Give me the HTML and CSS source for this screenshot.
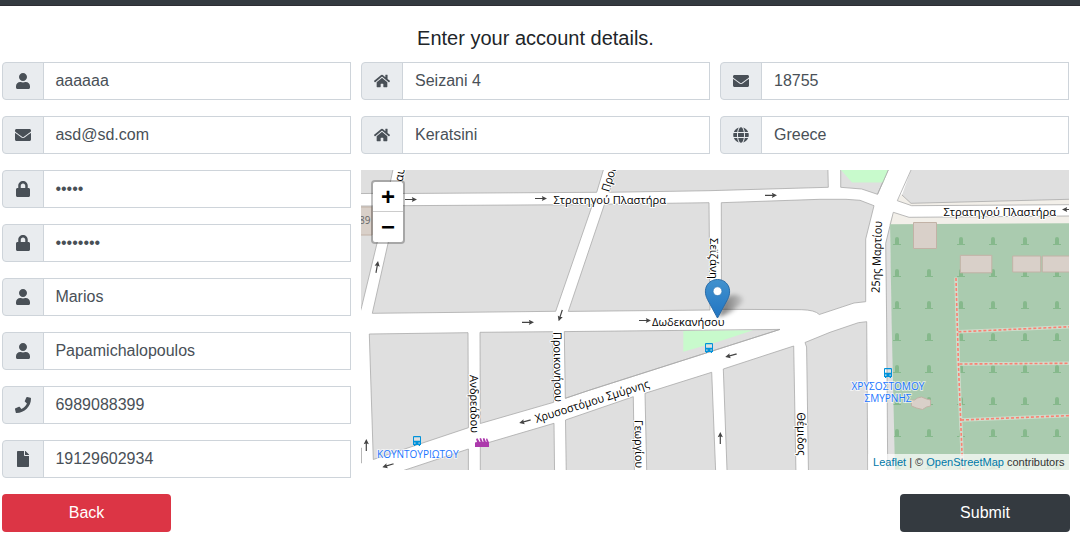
FILE: index.html
```html
<!DOCTYPE html>
<html lang="en">
<head>
<meta charset="utf-8">
<title>Account details</title>
<link rel="stylesheet" href="styles.css">
</head>
<body>
<svg class="sprite" aria-hidden="true">
  <symbol id="user" viewBox="0 0 448 512"><path d="M224 256c70.7 0 128-57.3 128-128S294.7 0 224 0 96 57.3 96 128s57.3 128 128 128zm89.6 32h-16.7c-22.2 10.2-46.9 16-72.9 16s-50.6-5.8-72.9-16h-16.7C60.2 288 0 348.2 0 422.4V464c0 26.5 21.5 48 48 48h352c26.5 0 48-21.5 48-48v-41.6c0-74.2-60.2-134.4-134.4-134.4z"/></symbol>
  <symbol id="envelope" viewBox="0 0 512 512"><path d="M502.3 190.8c3.9-3.1 9.7-.2 9.7 4.7V400c0 26.5-21.5 48-48 48H48c-26.5 0-48-21.5-48-48V195.6c0-5 5.7-7.8 9.7-4.7 22.4 17.4 52.1 39.5 154.1 113.6 21.1 15.4 56.7 47.8 92.2 47.6 35.7.3 72-32.8 92.3-47.6 102-74.1 131.6-96.3 154-113.7zM256 320c23.2.4 56.6-29.2 73.4-41.4 132.7-96.3 142.8-104.7 173.4-128.7 5.8-4.5 9.2-11.5 9.2-18.9v-19c0-26.5-21.5-48-48-48H48c-26.5 0-48 21.5-48 48v19c0 7.4 3.4 14.3 9.2 18.9 30.6 23.9 40.7 32.4 173.4 128.7 16.8 12.2 50.2 41.8 73.4 41.4z"/></symbol>
  <symbol id="lock" viewBox="0 0 448 512"><path d="M400 224h-24v-72C376 68.2 307.8 0 224 0S72 68.2 72 152v72H48c-26.5 0-48 21.5-48 48v192c0 26.5 21.5 48 48 48h352c26.5 0 48-21.5 48-48V272c0-26.5-21.5-48-48-48zm-104 0H152v-72c0-39.7 32.3-72 72-72s72 32.3 72 72v72z"/></symbol>
  <symbol id="home" viewBox="0 0 576 512"><path d="M280.37 148.26L96 300.11V464a16 16 0 0 0 16 16l112.06-.29a16 16 0 0 0 15.92-16V368a16 16 0 0 1 16-16h64a16 16 0 0 1 16 16v95.64a16 16 0 0 0 16 16.05L464 480a16 16 0 0 0 16-16V300L295.67 148.26a12.19 12.19 0 0 0-15.3 0zM571.6 251.47L488 182.56V44.05a12 12 0 0 0-12-12h-56a12 12 0 0 0-12 12v72.61L318.47 43a48 48 0 0 0-61 0L4.34 251.47a12 12 0 0 0-1.6 16.9l25.5 31A12 12 0 0 0 45.15 301l235.22-193.74a12.19 12.19 0 0 1 15.3 0L530.9 301a12 12 0 0 0 16.9-1.6l25.5-31a12 12 0 0 0-1.7-16.93z"/></symbol>
  <symbol id="globe" viewBox="0 0 496 512"><path d="M336.5 160C322 70.7 287.8 8 248 8s-74 62.7-88.5 152h177zM152 256c0 22.2 1.2 43.5 3.3 64h185.3c2.1-20.5 3.3-41.8 3.3-64s-1.2-43.5-3.3-64H155.3c-2.1 20.5-3.3 41.8-3.3 64zm324.7-96c-28.6-67.9-86.5-120.4-158-141.6 24.4 33.8 41.2 84.7 50 141.6h108zM177.2 18.4C105.8 39.6 47.8 92.1 19.3 160h108c8.7-56.9 25.5-107.8 49.9-141.6zM487.4 192H372.7c2.1 21 3.3 42.5 3.3 64s-1.2 43-3.3 64h114.6c5.5-20.5 8.6-41.8 8.6-64s-3.1-43.5-8.5-64zM120 256c0-21.5 1.2-43 3.3-64H8.6C3.2 212.5 0 233.8 0 256s3.2 43.5 8.6 64h114.6c-2-21-3.2-42.5-3.2-64zm39.5 96c14.5 89.3 48.7 152 88.5 152s74-62.7 88.5-152h-177zm159.3 141.6c71.4-21.2 129.4-73.7 158-141.6h-108c-8.8 56.9-25.6 107.8-50 141.6zM19.3 352c28.6 67.9 86.5 120.4 158 141.6-24.4-33.8-41.2-84.7-50-141.6h-108z"/></symbol>
  <symbol id="phone" viewBox="0 0 512 512"><path d="M493.4 24.6l-104-24c-11.3-2.6-22.9 3.3-27.5 13.9l-48 112c-4.2 9.8-1.4 21.3 6.9 28l60.6 49.6c-36 76.7-98.9 140.5-177.2 177.2l-49.6-60.6c-6.8-8.3-18.2-11.1-28-6.9l-112 48C3.9 366.5-2 378.1.6 389.4l24 104C27.1 504.2 36.7 512 48 512c256.1 0 464-207.5 464-464 0-11.2-7.7-20.9-18.6-23.4z"/></symbol>
  <symbol id="file" viewBox="0 0 384 512"><path d="M224 136V0H24C10.7 0 0 10.7 0 24v464c0 13.3 10.7 24 24 24h336c13.3 0 24-10.7 24-24V160H248c-13.2 0-24-10.8-24-24zm160-14.1v6.1H256V0h6.1c6.4 0 12.5 2.5 17 7l97.9 98c4.5 4.5 7 10.6 7 16.9z"/></symbol>
  <symbol id="arrow" viewBox="-6 -3 12 6"><path d="M-6-.6H1.5L.8-2.6 6 0 .8 2.6 1.5.6H-6z"/></symbol>
  <symbol id="bus" viewBox="0 0 8 10"><path fill="#0092da" fill-rule="evenodd" d="M1 0h6q1 0 1 1v8H7v1H5.7V9H2.3v1H1V9H0V1q0-1 1-1zM1 1.200v3.600h6V1.200zM1.200 6.400v1.300h1.300V6.400zm4.300 0v1.300h1.300V6.400z"/></symbol>
</svg>
<header class="topbar"></header>
<main class="page">
  <h1 class="title">Enter your account details.</h1>
  <form class="form">
    <div class="column">
      <label class="field"><span class="addon"><svg class="icon"><use href="#user"/></svg></span><input class="input" type="text" value="aaaaaa"></label>
      <label class="field"><span class="addon"><svg class="icon"><use href="#envelope"/></svg></span><input class="input" type="text" value="asd@sd.com"></label>
      <label class="field"><span class="addon"><svg class="icon"><use href="#lock"/></svg></span><input class="input" type="password" value="12345"></label>
      <label class="field"><span class="addon"><svg class="icon"><use href="#lock"/></svg></span><input class="input" type="password" value="12345678"></label>
      <label class="field"><span class="addon"><svg class="icon"><use href="#user"/></svg></span><input class="input" type="text" value="Marios"></label>
      <label class="field"><span class="addon"><svg class="icon"><use href="#user"/></svg></span><input class="input" type="text" value="Papamichalopoulos"></label>
      <label class="field"><span class="addon"><svg class="icon"><use href="#phone"/></svg></span><input class="input" type="text" value="6989088399"></label>
      <label class="field"><span class="addon"><svg class="icon"><use href="#file"/></svg></span><input class="input" type="text" value="19129602934"></label>
    </div>
    <div class="address">
      <div class="address-grid">
        <label class="field"><span class="addon"><svg class="icon"><use href="#home"/></svg></span><input class="input" type="text" value="Seizani 4"></label>
        <label class="field"><span class="addon"><svg class="icon"><use href="#envelope"/></svg></span><input class="input" type="text" value="18755"></label>
        <label class="field"><span class="addon"><svg class="icon"><use href="#home"/></svg></span><input class="input" type="text" value="Keratsini"></label>
        <label class="field"><span class="addon"><svg class="icon"><use href="#globe"/></svg></span><input class="input" type="text" value="Greece"></label>
      </div>
      <div class="map">
        <svg class="tiles" viewBox="361 170 708 300" width="708" height="300">
          <defs>
            <pattern id="graves" patternUnits="userSpaceOnUse" x="881" y="224" width="32" height="32">
              <path fill="#86b98c" d="M14 20v-5q0-2 2-2t2 2v5h2v1h-8v-1z"/>
            </pattern>
            <linearGradient id="pin" x1="0" y1="0" x2="0" y2="1"><stop offset="0" stop-color="#4292ce"/><stop offset="1" stop-color="#2074c2"/></linearGradient>
            <linearGradient id="shade" x1="0" y1="0" x2="1" y2="0"><stop offset="0" stop-opacity=".55"/><stop offset="1" stop-opacity=".1"/></linearGradient>
            <filter id="blur" x="-30%" y="-30%" width="160%" height="160%"><feGaussianBlur stdDeviation="2"/></filter>
          </defs>
          <rect class="road" x="361" y="170" width="708" height="300"/>
          <!-- city blocks -->
          <g class="blocks">
            <path d="M355 160H395L388 193.300L355 193.600z"/>
            <path d="M407 160H606.300L596.700 192.300L400 193.500z"/>
            <path d="M619 160H827.700L828.300 187.300L709 190.700L609 192.300z"/>
            <path d="M840.700 160V187.300L861.700 189L877.500 194.300L892.500 160z"/>
            <path d="M355 206H386L361.700 306.700L355 330z"/>
            <path d="M396.500 205.700L592.500 204.600L555.700 311.300L372.300 313.300z"/>
            <path d="M604.500 204.200L709 202.700L710 310L568.300 311.400z"/>
            <path d="M721.300 202.700L820 199.300L846 199.300L860 200.300L874 205.700L865.700 239V301.700L854 303L819.300 314.500Q815 310 801.700 309.700L721.500 309.300z"/>
            <path d="M369.300 334L468 332.700L468.400 427.700L373.300 459.500z"/>
            <path d="M480 332.300L552.700 331.700L553.700 402.300L480.300 423.500z"/>
            <path d="M564.300 331.600L780 329.400L590 390L565.300 398.300z"/>
            <path d="M402 471L468.400 449V475H402z"/>
            <path d="M480.300 445L554 423.300L554.600 475H480.300z"/>
            <path d="M565.500 420L633.300 396.700L634.500 475H566.300z"/>
            <path d="M645 393.300L711.700 372.300L715.800 475H646.800z"/>
            <path d="M723.300 369L793.700 346L796 475H727.200z"/>
            <path d="M805 342.500L830 332.300L858.300 322.700L866.700 321.700L867.800 475H808.500L806.600 347z"/>
            <path d="M355 448H361.500V463H355z"/>
          </g>
          <path fill="#c8facc" d="M841 170L852 182.600H883.500L888 170zM683.300 331L753 330.300L719 341.500L683.300 351.800z"/>
          <path class="edge" d="M565.300 398.300L590 390L780 329.400M877.500 194.300L888.300 170"/>
          <path fill="#f2efe9" d="M901.700 194L897.300 200.700L911.700 205.700L1069 204.700V199zM893.300 212.300L909 217.300L1069 216V225H889z"/>
          <path class="block-fill" d="M911 170L902 195L911 203.300L1069 199.300V170zM893.300 212.300L885.700 243.300L887.700 470H896L890 224z"/>
          <path class="edge" d="M911 170L897.300 200.700L911.700 205.700L1069 204.700M902 195L911 203.300L1069 199.300M1069 216L909 217.300L893.300 212.300L885.700 243.300L886.700 325L887.700 470"/>
          <!-- cemetery -->
          <path fill="#aacbaf" d="M890 224.300L1069 223.300V470H895L891.700 325z"/>
          <path fill="url(#graves)" d="M890 224.300L1069 223.300V470H895L891.700 325z"/>
          <g class="buildings">
            <path d="M913.500 222.500h23v26h-23zM960.300 255.300h31.500v17.500h-31.500zM1012.700 256h28v16h-28zM1042.300 256h30v16h-30z"/>
            <path d="M911.500 400h3l3-2 4-1 5 2 4 1v6l-4 1-4 2.500-6-1.500-5-2z"/>
            <path d="M355 207h17v28h-17z"/>
          </g>
          <g class="paths">
            <path d="M956 277.500L958.400 364L962.700 470M958.400 331.800L1069 326.800M959.500 364L1069 363.300M961 420L1069 415.600"/>
            <path class="dashes" d="M956 278L958.400 364L962.700 470M958.400 331.800L1069 326.800M959.500 364L1069 363.300M961 420L1069 415.600"/>
          </g>
          <!-- one-way arrows -->
          <g fill="#444">
            <use href="#arrow" x="-6" y="-3" width="12" height="6" transform="translate(411 199.500)"/>
            <use href="#arrow" x="-6" y="-3" width="12" height="6" transform="translate(541 198.500)"/>
            <use href="#arrow" x="-6" y="-3" width="12" height="6" transform="translate(771 195.300)"/>
            <use href="#arrow" x="-6" y="-3" width="12" height="6" transform="translate(528 322.300)"/>
            <use href="#arrow" x="-6" y="-3" width="12" height="6" transform="translate(645 320.500)"/>
            <use href="#arrow" x="-6" y="-3" width="12" height="6" transform="translate(377 267) rotate(-80)"/>
            <use href="#arrow" x="-6" y="-3" width="12" height="6" transform="translate(560.500 315.500) rotate(108)"/>
            <use href="#arrow" x="-6" y="-3" width="12" height="6" transform="translate(366.300 445) rotate(-90)"/>
            <use href="#arrow" x="-6" y="-3" width="12" height="6" transform="translate(720.300 438) rotate(-90)"/>
            <use href="#arrow" x="-6" y="-3" width="12" height="6" transform="translate(525 421.500) rotate(165)"/>
            <use href="#arrow" x="-6" y="-3" width="12" height="6" transform="translate(731 355.500) rotate(165)"/>
            <use href="#arrow" x="-6" y="-3" width="12" height="6" transform="translate(388 465.500) rotate(163)"/>
            <use href="#arrow" x="-6" y="-3" width="12" height="6" transform="translate(1068 209.500) rotate(180)"/>
          </g>
          <g class="street">
            <text x="553.500" y="203.700" textLength="112.500" lengthAdjust="spacingAndGlyphs">Στρατηγού Πλαστήρα</text>
            <text x="943.500" y="215.700" textLength="112.500" lengthAdjust="spacingAndGlyphs">Στρατηγού Πλαστήρα</text>
            <text x="652" y="325.800" textLength="72.500" lengthAdjust="spacingAndGlyphs">Δωδεκανήσου</text>
            <text transform="translate(879.500 293) rotate(-88)" textLength="72" lengthAdjust="spacingAndGlyphs">25ης Μαρτίου</text>
            <text transform="translate(710 238) rotate(90)" textLength="41" lengthAdjust="spacingAndGlyphs">Σεϊζάνη</text>
            <text transform="translate(469.800 375) rotate(89)" textLength="58" lengthAdjust="spacingAndGlyphs">Ανδρεάδου</text>
            <text transform="translate(553.300 332) rotate(89)" textLength="70" lengthAdjust="spacingAndGlyphs">Προικονήσου</text>
            <text transform="translate(634.500 420) rotate(89)" textLength="48" lengthAdjust="spacingAndGlyphs">Γεωργίου</text>
            <text transform="translate(797 412.500) rotate(89)" textLength="43" lengthAdjust="spacingAndGlyphs">Θέμιδος</text>
            <text transform="translate(536.500 423) rotate(-17.500)" textLength="119" lengthAdjust="spacingAndGlyphs">Χρυσοστόμου Σμύρνης</text>
            <text transform="translate(609 192.500) rotate(-73)" textLength="70" lengthAdjust="spacingAndGlyphs">Προικονήσου</text>
            <text transform="translate(402.500 182) rotate(-80)">αυα</text>
          </g>
          <text x="359" y="224" class="number">89</text>
          <g class="stop">
            <text x="377" y="458" textLength="81.500" lengthAdjust="spacingAndGlyphs">ΚΟΥΝΤΟΥΡΙΩΤΟΥ</text>
            <text x="851.500" y="389.500" textLength="73" lengthAdjust="spacingAndGlyphs">ΧΡΥΣΟΣΤΟΜΟΥ</text>
            <text x="864.500" y="401.500" textLength="47" lengthAdjust="spacingAndGlyphs">ΣΜΥΡΝΗΣ</text>
          </g>
          <use href="#bus" x="413" y="436" width="8" height="10"/>
          <use href="#bus" x="705" y="343" width="8" height="10"/>
          <use href="#bus" x="884" y="368" width="8" height="10"/>
          <path fill="#ac39ac" d="M475 447v-4.500l2-.5-1-3 1.500-.8 2.200 3.800h.8l-1-3.600 1.500-.4 1.800 4h.7l-.7-3.600 1.500-.4 1.700 4h.6l-.6-3.300 1.200-.3 1.800 4.100v4.500z"/>
          <path fill="url(#shade)" filter="url(#blur)" d="M718 317L724 300Q732 292 740 296T736 308Q730 314 718 317z"/>
          <path fill="url(#pin)" stroke="#2a6ca8" d="M717.500 318L707.500 299.500C702 289 708 279.500 717.500 279.500S733 289 727.500 299.500z"/>
          <circle cx="717.500" cy="291.200" r="4.400" fill="#fff" stroke="#2f78b5" stroke-width=".7"/>
        </svg>
        <div class="zoom">
          <a class="zoom-button">+</a>
          <a class="zoom-button">−</a>
        </div>
        <div class="attribution"><a class="link">Leaflet</a> | © <a class="link">OpenStreetMap</a> contributors</div>
      </div>
    </div>
  </form>
  <div class="actions">
    <button class="button back">Back</button>
    <button class="button submit">Submit</button>
  </div>
</main>
</body>
</html>
```
FILE: styles.css
```css
* { box-sizing: border-box; }
body {
  margin: 0;
  background: #fff;
  color: #212529;
  font: 16px/24px "Liberation Sans", Arial, sans-serif;
  overflow: hidden;
}
.sprite { display: none; }
.topbar {
  height: 6px;
  background: #343a40;
  border-bottom: 1px solid #2d2d33;
}
.page { padding: 20px 10px 0 2px; }
.title {
  margin: 0 0 12px;
  width: 1067px;
  text-align: center;
  font-size: 20px;
  font-weight: 400;
  line-height: 24px;
}
.form {
  display: grid;
  grid-template-columns: 349px 708px;
  gap: 10px;
  width: 1067px;
}
.column { display: flex; flex-direction: column; gap: 16px; }
.address { display: flex; flex-direction: column; gap: 16px; }
.address-grid {
  display: grid;
  grid-template-columns: 349px 349px;
  gap: 16px 10px;
}
.field { display: flex; height: 38px; }
.addon {
  display: flex;
  align-items: center;
  justify-content: center;
  width: 42px;
  background: #e9ecef;
  border: 1px solid #ced4da;
  border-radius: 4px 0 0 4px;
}
.icon { width: 16px; height: 16px; fill: #495057; }
.input {
  flex: 1;
  min-width: 0;
  margin: 0 0 0 -1px;
  padding: 6px 12px;
  border: 1px solid #ced4da;
  border-radius: 0;
  background: #fff;
  color: #495057;
  font: inherit;
}
.column .input { padding-left: 11.4px; }
.map { position: relative; width: 708px; height: 300px; overflow: hidden; }
.tiles { display: block; }
.road { fill: #fff; }
.blocks { fill: #dfdfdf; stroke: #aaa; stroke-width: .8; }
.block-fill { fill: #dfdfdf; }
.edge { fill: none; stroke: #aaa; stroke-width: .8; }
.buildings { fill: #d9d0c9; stroke: #c2b2a6; stroke-width: 1; }
.paths { fill: none; stroke: #cfdccb; stroke-width: 3.4; }
.paths .dashes { stroke: #fa8072; stroke-width: 1.6; stroke-dasharray: 3 2; }
.street {
  font: 11.5px "Open Sans", "Noto Sans", sans-serif;
  fill: #000;
  stroke: #fff;
  stroke-width: 2px;
  stroke-linejoin: round;
  paint-order: stroke;
}
.number { font: 10px "Open Sans", "Noto Sans", sans-serif; fill: #666; }
.stop {
  font: 10.5px "Open Sans", "Noto Sans", sans-serif;
  fill: #1a75ff;
  stroke: rgba(255, 255, 255, .6);
  stroke-width: 2px;
  paint-order: stroke;
}
.zoom {
  position: absolute;
  left: 10px;
  top: 10px;
  display: flex;
  flex-direction: column;
  width: 34px;
  border: 2px solid rgba(0, 0, 0, .25);
  border-radius: 4px;
  background: #fff;
  background-clip: padding-box;
}
.zoom-button {
  height: 30px;
  color: #000;
  text-align: center;
  font: bold 24px/30px "Liberation Sans", sans-serif;
}
.zoom-button:first-child { border-bottom: 1px solid #ccc; }
.attribution {
  position: absolute;
  right: 0;
  bottom: 0;
  padding: 0 4.6px 0 5px;
  background: rgba(255, 255, 255, .7);
  color: #333;
  font-size: 11px;
  line-height: 16px;
}
.link { color: #0078a8; }
.actions {
  display: flex;
  justify-content: space-between;
  width: 1068px;
  margin-top: 16px;
}
.button {
  width: 169px;
  height: 38px;
  border: 0;
  border-radius: 4px;
  color: #fff;
  font: inherit;
}
.back { background: #dc3545; }
.submit { width: 170px; background: #343a40; }
```
